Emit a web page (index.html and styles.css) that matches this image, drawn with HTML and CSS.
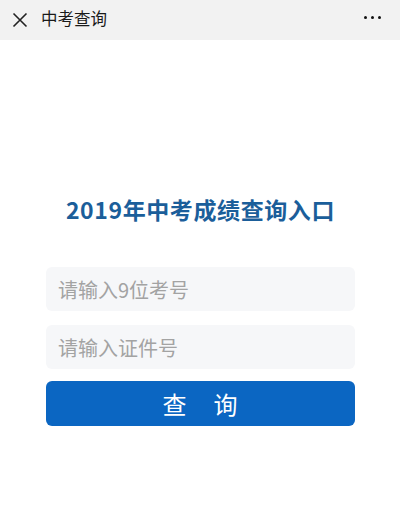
FILE: index.html
```html
<!DOCTYPE html>
<html lang="zh">
<head>
<meta charset="utf-8">
<link rel="stylesheet" href="styles.css">
</head>
<body>
<div class="page">
  <header class="topbar">
    <svg class="close" width="16" height="16" viewBox="0 0 16 16"><path d="M1.5 1.5 L14.5 14.5 M14.5 1.5 L1.5 14.5" stroke="#222" stroke-width="1.6" fill="none"/></svg>
    <span class="bar-title">中考查询</span>
    <span class="more"><i></i><i></i><i></i></span>
  </header>
  <main class="content">
    <h1 class="heading">2019年中考成绩查询入口</h1>
    <form class="form">
      <input class="field" type="text" placeholder="请输入9位考号">
      <input class="field" type="text" placeholder="请输入证件号">
      <button class="submit" type="button">查&ensp;&ensp;询</button>
    </form>
  </main>
</div>
</body>
</html>
```
FILE: styles.css
```css
* { box-sizing: border-box; }
html, body { margin: 0; padding: 0; }
body {
  width: 400px;
  height: 511px;
  background: #ffffff;
  font-family: "Noto Sans CJK SC", "Noto Sans", sans-serif;
  overflow: hidden;
}
.topbar {
  height: 40px;
  background: #f2f2f2;
  display: flex;
  align-items: center;
  padding: 0 16px 0 12px;
}
.close { display: block; flex: none; }
.bar-title {
  margin-left: 13px;
  font-size: 16.5px;
  color: #1a1a1a;
  line-height: 1;
  margin-top: -4px;
}
.more {
  margin-left: auto;
  display: flex;
  gap: 4px;
  margin-top: -6px;
  margin-right: 3px;
}
.more i {
  display: block;
  width: 3px;
  height: 3px;
  border-radius: 50%;
  background: #111;
}
.content {
  padding: 154px 45px 0 46px;
}
.heading {
  margin: 0;
  text-align: center;
  font-size: 23px;
  font-weight: 700;
  color: #1b5e9a;
  letter-spacing: 0.6px;
  line-height: 30px;
}
.form {
  margin-top: 43px;
  display: flex;
  flex-direction: column;
  gap: 14px;
}
.field {
  height: 44px;
  border: none;
  outline: none;
  border-radius: 6px;
  background: #f6f7f9;
  padding: 0 12px;
  font-family: inherit;
  font-size: 20px;
  color: #333;
}
.field::placeholder { color: #a3a3a3; }
.submit {
  margin-top: -2px;
  height: 45px;
  border: none;
  border-radius: 6px;
  background: #0b66c2;
  color: #ffffff;
  font-family: inherit;
  font-size: 24px;
  letter-spacing: 1px;
  line-height: 1;
  padding: 0;
}
```
